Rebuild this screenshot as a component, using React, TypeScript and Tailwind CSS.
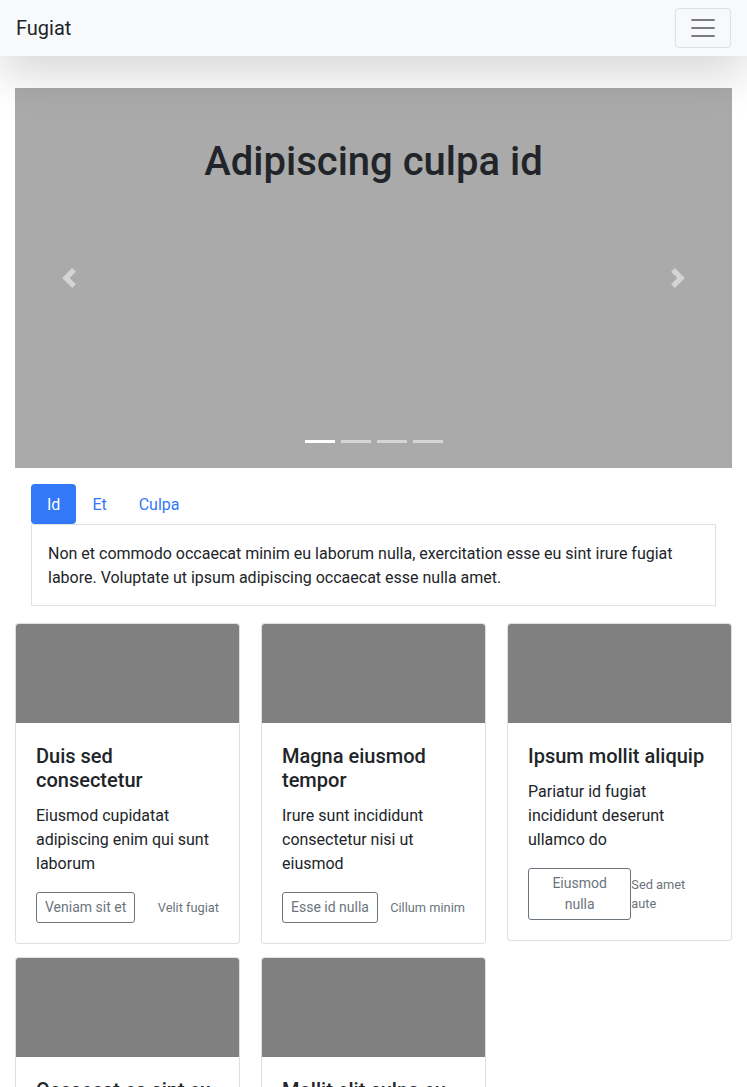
import React, { useState } from 'react';

type Card = {
  title: string;
  text: string;
  button: string;
  note: string;
};

const cards: Card[] = [
  {
    title: 'Duis sed consectetur',
    text: 'Eiusmod cupidatat adipiscing enim qui sunt laborum',
    button: 'Veniam sit et',
    note: 'Velit fugiat',
  },
  {
    title: 'Magna eiusmod tempor',
    text: 'Irure sunt incididunt consectetur nisi ut eiusmod',
    button: 'Esse id nulla',
    note: 'Cillum minim',
  },
  {
    title: 'Ipsum mollit aliquip',
    text: 'Pariatur id fugiat incididunt deserunt ullamco do',
    button: 'Eiusmod nulla',
    note: 'Sed amet aute',
  },
  {
    title: 'Occaecat ea sint ex',
    text: 'Lorem aute dolor officia nisi labore',
    button: 'Anim esse',
    note: 'Aute elit',
  },
  {
    title: 'Mollit elit culpa eu',
    text: 'Consequat nostrud proident qui magna',
    button: 'Quis enim',
    note: 'Duis ex',
  },
];

const tabs = [
  {
    label: 'Id',
    body: 'Non et commodo occaecat minim eu laborum nulla, exercitation esse eu sint irure fugiat labore. Voluptate ut ipsum adipiscing occaecat esse nulla amet.',
  },
  { label: 'Et', body: 'Et laboris veniam dolore aliqua cillum sunt officia.' },
  { label: 'Culpa', body: 'Culpa anim tempor exercitation magna ad nostrud.' },
];

const Chevron = ({ dir }: { dir: 'prev' | 'next' }) => (
  <svg width="20" height="20" viewBox="0 0 8 8" fill="#fff">
    {dir === 'prev' ? (
      <path d="M5.25 0l-4 4 4 4 1.5-1.5L4.25 4l2.5-2.5L5.25 0z" />
    ) : (
      <path d="M2.75 0l-1.5 1.5L3.75 4l-2.5 2.5L2.75 8l4-4-4-4z" />
    )}
  </svg>
);

export default function App() {
  const [slide, setSlide] = useState(0);
  const [tab, setTab] = useState(0);

  return (
    <div className="h-[1087px] overflow-hidden bg-white font-['Roboto','Liberation_Sans',sans-serif] text-[#212529] text-base leading-6">
      <nav className="relative z-10 flex h-14 items-center justify-between bg-[#f8f9fa] px-4 shadow-[0_1rem_3rem_rgba(0,0,0,0.175)]">
        <span className="text-xl leading-[30px]">Fugiat</span>
        <button className="rounded border border-black/10 px-3 py-1">
          <svg width="30" height="30" viewBox="0 0 30 30">
            <path
              d="M4 7h22M4 15h22M4 23h22"
              stroke="rgba(0,0,0,0.5)"
              strokeWidth="2"
              strokeLinecap="round"
              strokeMiterlimit="10"
            />
          </svg>
        </button>
      </nav>

      <main className="px-[15px] pt-8">
        <div className="relative h-[380px] bg-[#aaaaaa]">
          <h1 className="pt-[50px] text-center text-[40px] font-medium leading-[48px]">Adipiscing culpa id</h1>
          <button
            onClick={() => setSlide((slide + 3) % 4)}
            className="absolute inset-y-0 left-0 flex w-[15%] items-center justify-center opacity-50"
          >
            <Chevron dir="prev" />
          </button>
          <button
            onClick={() => setSlide((slide + 1) % 4)}
            className="absolute inset-y-0 right-0 flex w-[15%] items-center justify-center opacity-50"
          >
            <Chevron dir="next" />
          </button>
          <div className="absolute inset-x-0 bottom-[25px] flex justify-center gap-[6px]">
            {[0, 1, 2, 3].map((i) => (
              <span
                key={i}
                onClick={() => setSlide(i)}
                className={i === slide ? 'h-[3px] w-[30px] bg-white' : 'h-[3px] w-[30px] bg-white/50'}
              />
            ))}
          </div>
        </div>

        <div className="px-4 pt-4">
          <div className="flex">
            {tabs.map((t, i) => (
              <button
                key={t.label}
                onClick={() => setTab(i)}
                className={
                  i === tab
                    ? 'rounded bg-[#3378f6] px-4 pt-[9px] pb-[7px] text-white'
                    : 'rounded px-4 pt-[9px] pb-[7px] text-[#3378f6]'
                }
              >
                {t.label}
              </button>
            ))}
          </div>
          <div className="border border-[#dee2e6] px-4 pt-[17px] pb-[15px]">{tabs[tab].body}</div>
        </div>

        <div className="mt-[17px] grid grid-cols-3 items-start gap-x-[21px] gap-y-[13px]">
          {cards.map((c) => (
            <div key={c.title} className="rounded border border-black/[0.125] bg-white">
              <div className="h-[99px] rounded-t-[3px] bg-[#808080]" />
              <div className="px-5 pt-[21px] pb-5">
                <h5 className="mb-3 text-xl font-medium leading-6">{c.title}</h5>
                <p className="mb-4">{c.text}</p>
                <div className="flex items-center justify-between">
                  <button className="rounded-[3px] border border-[#6c757d] px-2 py-1 text-sm leading-[21px] text-[#6c757d]">
                    {c.button}
                  </button>
                  <small className="text-[12.8px] leading-[19.2px] text-[#6c757d]">{c.note}</small>
                </div>
              </div>
            </div>
          ))}
        </div>
      </main>
    </div>
  );
}
